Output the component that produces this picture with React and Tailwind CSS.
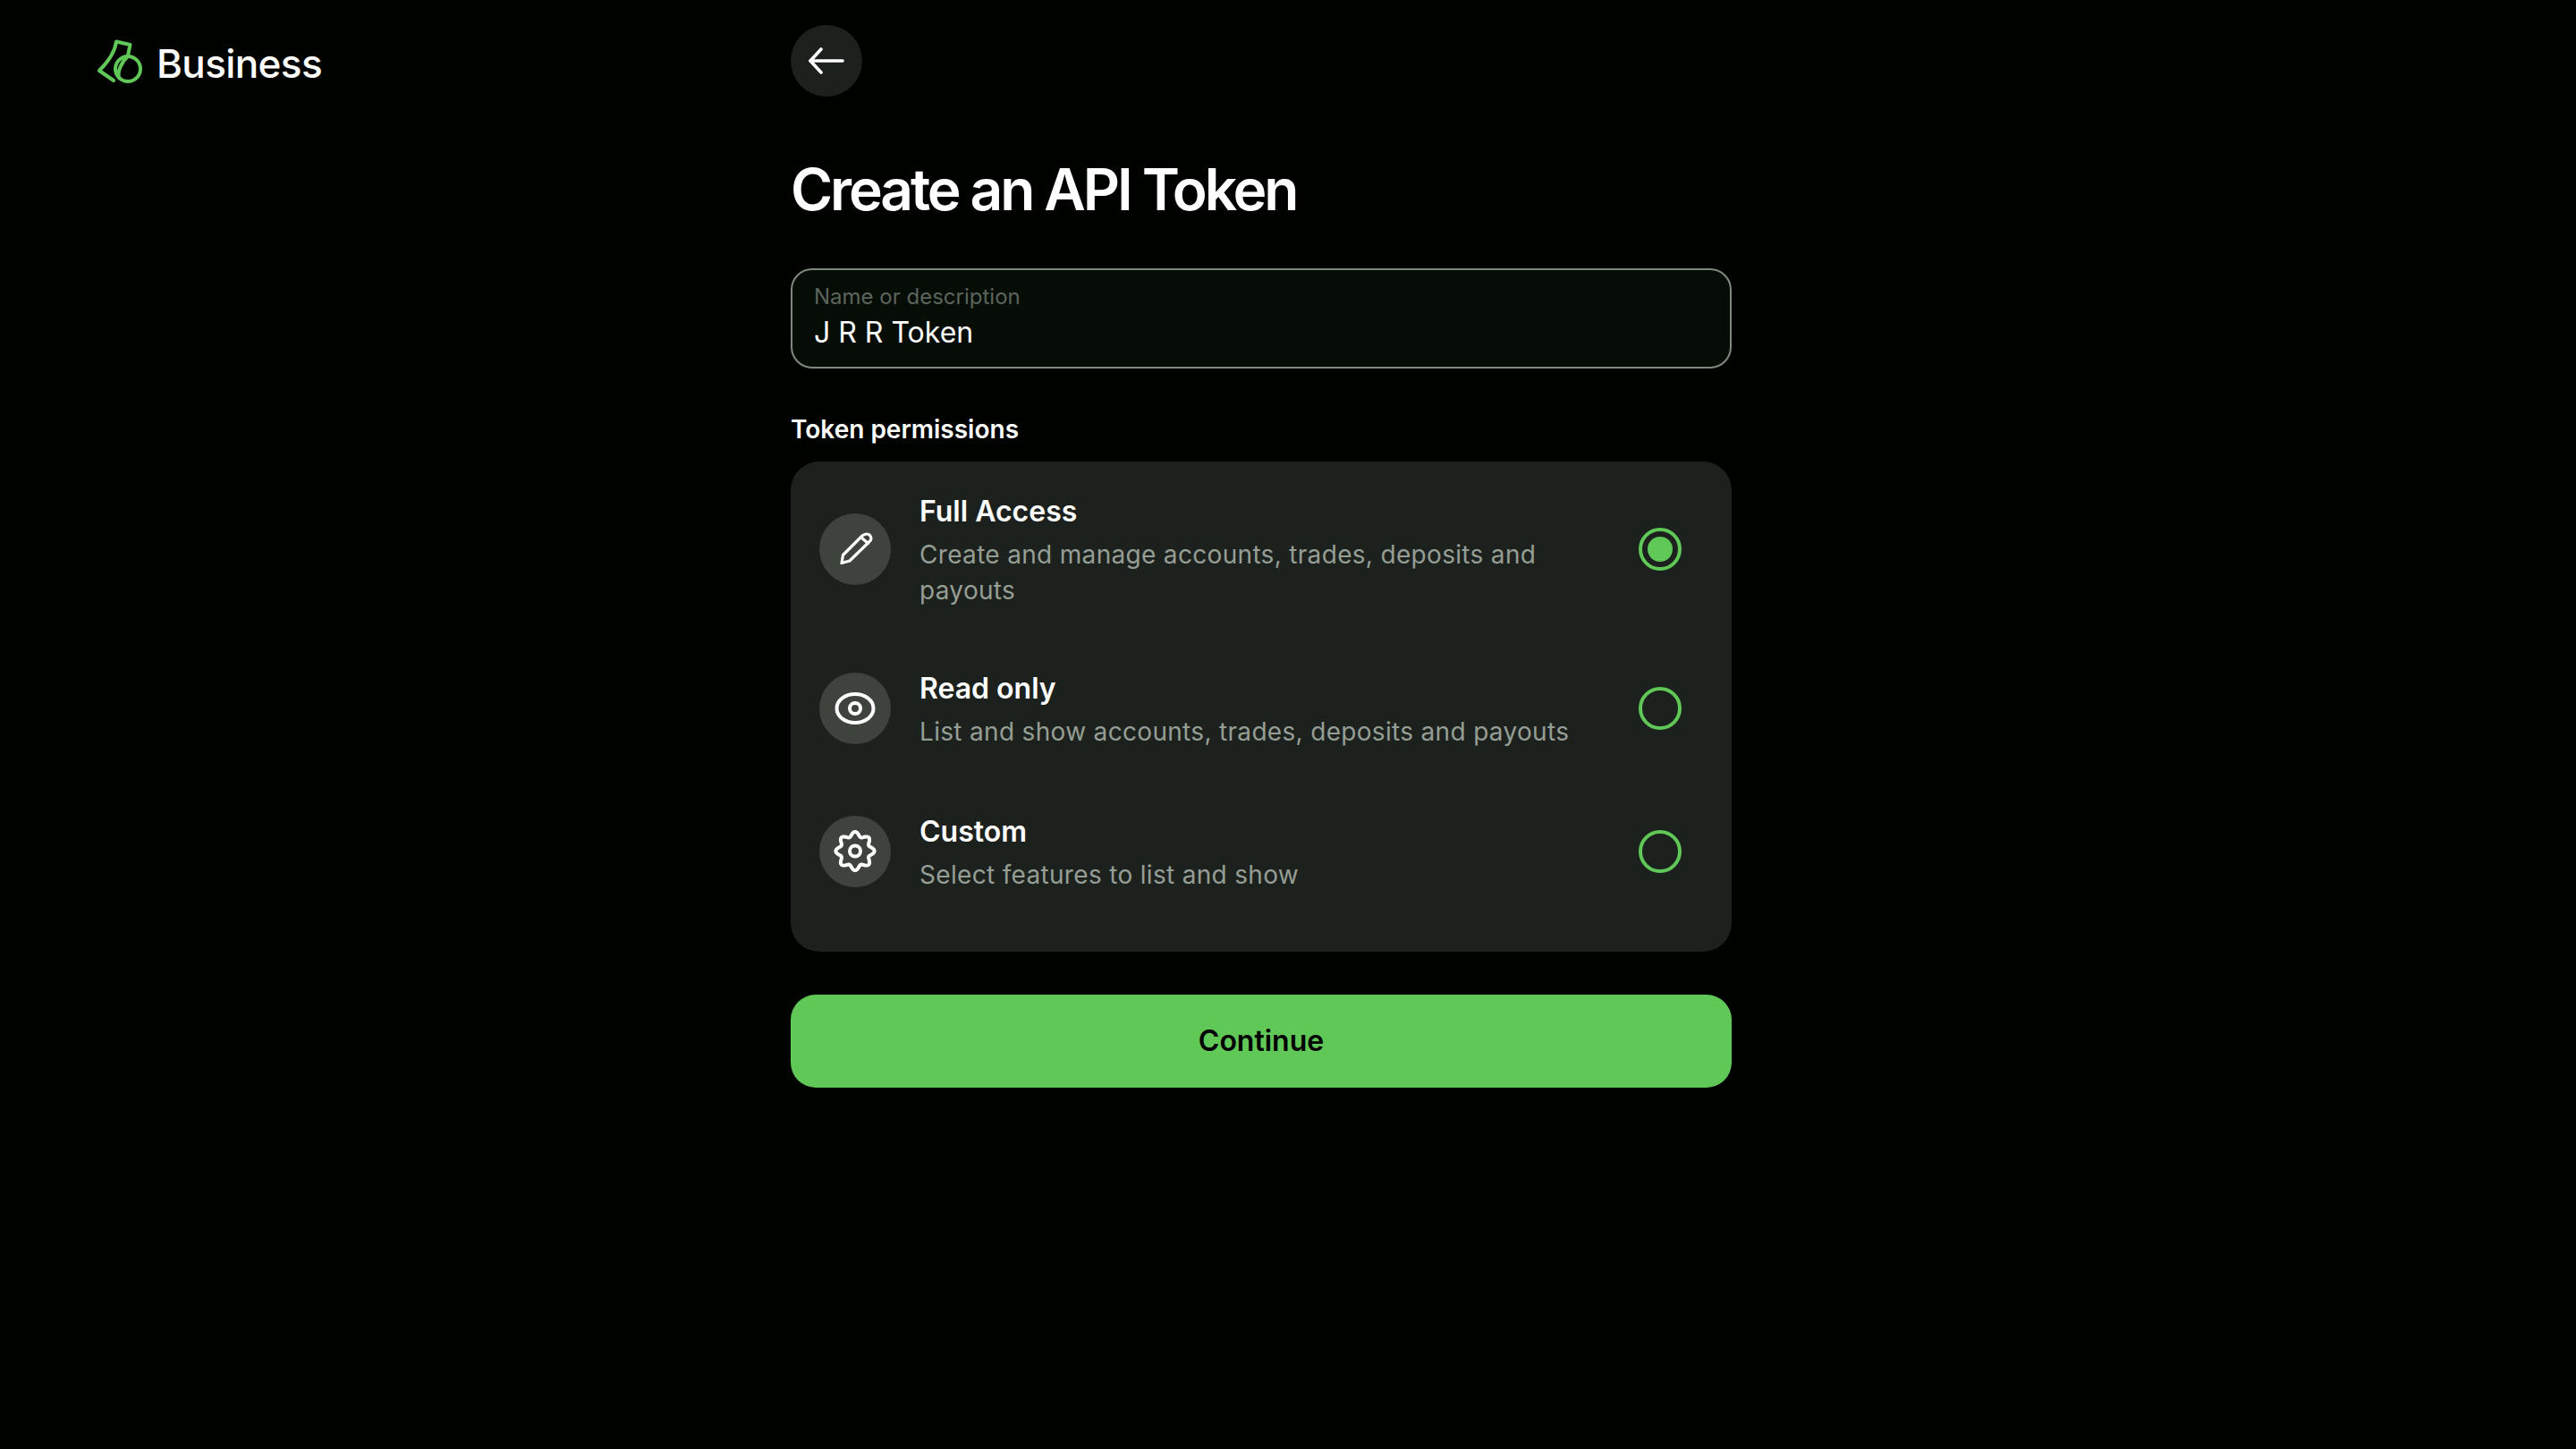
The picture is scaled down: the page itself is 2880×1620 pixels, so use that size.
import React from 'react'

const gearPoints = Array.from({ length: 120 }, (_, i) => {
  const a = (i * 3 * Math.PI) / 180
  const r = 19 + 2.6 * Math.cos(8 * a)
  return `${(25 + r * Math.sin(a)).toFixed(2)},${(24.5 - r * Math.cos(a)).toFixed(2)}`
}).join(' ')

function Logo() {
  return (
    <svg width="70" height="60" viewBox="0 0 70 60" fill="none" stroke="#5fc857" strokeWidth="4" strokeLinejoin="round" strokeLinecap="round">
      <path d="M43 22 L45.5 10 L30 6.5 C28.5 18 21 29 11 39 L27 50" />
      <circle cx="43" cy="37" r="14" />
      <path d="M43 23 C36 29 31 40 33 47" />
    </svg>
  )
}

function PencilIcon() {
  return (
    <svg width="50" height="50" viewBox="0 0 50 50" fill="none" stroke="white" strokeWidth="3.2" strokeLinejoin="round" strokeLinecap="round">
      <path d="M10 40.5 L11.5 31.5 L33 10 C36 7.5 39.5 7.5 41.5 9.5 C43.5 12 43.5 14.5 41 16.5 L19 38 Z" />
      <path d="M32 12 L39.5 18.5" />
    </svg>
  )
}

function EyeIcon() {
  return (
    <svg width="50" height="50" viewBox="0 0 50 50" fill="none" stroke="white" strokeWidth="4">
      <ellipse cx="25" cy="25" rx="20.5" ry="16" />
      <circle cx="25" cy="25" r="6" />
    </svg>
  )
}

function GearIcon() {
  return (
    <svg width="50" height="50" viewBox="0 0 50 50" fill="none" stroke="white" strokeWidth="4" strokeLinejoin="round">
      <polygon points={gearPoints} />
      <circle cx="25" cy="24.5" r="6" />
    </svg>
  )
}

function PermissionRow({ icon, title, desc, checked, rowClass }) {
  return (
    <div className={`flex items-center pl-8 pr-14 ${rowClass}`}>
      <div className='w-20 h-20 rounded-full bg-[#3e433d] flex items-center justify-center shrink-0'>
        {icon}
      </div>
      <div className='ml-8 w-[740px]'>
        <p className='text-[32px] leading-[48px] font-semibold text-white'>{title}</p>
        <p className='mt-1 text-[28px] leading-[40px] text-[#959e94] tracking-[0.32px]'>{desc}</p>
      </div>
      <div className='ml-auto w-12 h-12 rounded-full border-4 border-[#5fc857] flex items-center justify-center shrink-0'>
        {checked && <div className='w-7 h-7 rounded-full bg-[#5fc857]' />}
      </div>
    </div>
  )
}

function App() {
  return (
    <div className="w-full min-h-[1620px] bg-[#000200] flex font-['Inter',sans-serif]">
      <div className='w-[884px] pl-[100px] pt-10'>
        <div className='flex items-center gap-[5px]'>
          <Logo />
          <span className='text-[44px] leading-[50px] font-medium text-white tracking-[-0.6px] mt-[2px]'>Business</span>
        </div>
      </div>

      <div className='w-[1052px] pt-7'>
        <button type="button" className='w-20 h-20 rounded-full bg-[#1d211e] flex items-center justify-center'>
          <svg width="40" height="30" viewBox="0 0 40 30" fill="none" stroke="white" strokeWidth="3.6" strokeLinecap="round" strokeLinejoin="round">
            <path d="M38 15 H2" />
            <path d="M14 2 L2 15 L14 28" />
          </svg>
        </button>

        <h1 className='mt-16 text-[64px] leading-[80px] font-[630] text-white tracking-[-3.1px]'>Create an API Token</h1>

        <div className='mt-12 h-[112px] rounded-[24px] border-2 border-[#7f8a7c] bg-[#060c06] pl-6 pt-[15px]'>
          <p className='text-[24px] leading-[30px] text-[#5b655b]'>Name or description</p>
          <p className='mt-1 text-[32px] leading-[42px] text-white'>J R R Token</p>
        </div>

        <h2 className='mt-12 text-[28px] leading-[40px] font-semibold text-white'>Token permissions</h2>

        <div className='mt-4 rounded-[32px] bg-[#1d211e] pb-8'>
          <PermissionRow
            icon={<PencilIcon />}
            title="Full Access"
            desc="Create and manage accounts, trades, deposits and payouts"
            checked
            rowClass="h-[196px]"
          />
          <PermissionRow
            icon={<EyeIcon />}
            title="Read only"
            desc="List and show accounts, trades, deposits and payouts"
            rowClass="h-40"
          />
          <PermissionRow
            icon={<GearIcon />}
            title="Custom"
            desc="Select features to list and show"
            rowClass="h-40"
          />
        </div>

        <button type="button" className='mt-12 w-full h-[104px] rounded-[28px] bg-[#5fc857] text-[32px] font-semibold text-black'>
          Continue
        </button>
      </div>
    </div>
  )
}

export default App
